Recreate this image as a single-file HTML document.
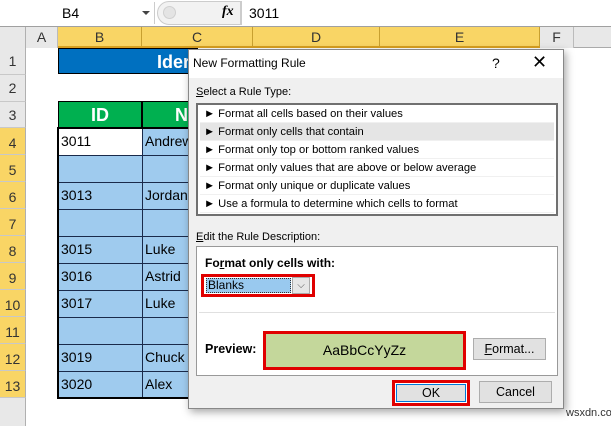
<!DOCTYPE html>
<html><head><style>
*{margin:0;padding:0;box-sizing:border-box}
body{width:611px;height:426px;overflow:hidden;background:#fff;font-family:"Liberation Sans",Calibri,sans-serif;position:relative;font-size:13px;color:#000}
.a{position:absolute}
.rh{position:absolute;left:0;width:26px;text-align:center;font-size:14px;color:#333;border-bottom:1px solid #c8c8c8;border-right:1px solid #b0b0b0}
.ch{position:absolute;top:27px;height:21px;text-align:center;font-size:14px;color:#333;line-height:21px;border-right:1px solid #c8a030}
.cell{position:absolute;font-size:14px;line-height:27px;padding-left:3px}
.it{height:18px;line-height:18px;padding-left:4px;font-size:11.2px;font-family:"Liberation Sans",sans-serif;border-bottom:1px solid #f0f0f0}
.btn{position:absolute;background:#e1e1e1;border:1px solid #adadad;font-size:12.5px;text-align:center}
</style></head><body>
<div class="a" style="left:0;top:0;width:611px;height:27px;background:#fff;border-bottom:1px solid #a0a0a0"></div>
<div class="a" style="left:0;top:2px;width:155px;height:22px;border-right:1px solid #ccc"></div>
<div class="a" style="left:62px;top:5px;font-size:14px">B4</div>
<div class="a" style="left:142px;top:11px;width:0;height:0;border-left:4px solid transparent;border-right:4px solid transparent;border-top:4px solid #444"></div>
<div class="a" style="left:157px;top:1px;width:84px;height:24px;background:#f2f2f2;border:1px solid #ccc;border-radius:12px 0 0 12px"></div>
<div class="a" style="left:163px;top:6px;width:13px;height:13px;border-radius:50%;background:#e4e4e4;border:1px solid #d0d0d0"></div>
<div class="a" style="left:222px;top:4px;font-family:'Liberation Serif',serif;font-style:italic;font-weight:bold;font-size:14px">fx</div>
<div class="a" style="left:241px;top:1px;width:370px;height:24px;border-left:1px solid #ccc;background:#fff"></div>
<div class="a" style="left:249px;top:5px;font-size:14px">3011</div>
<div class="a" style="left:0;top:27px;width:611px;height:21px;background:#e8e8e8;border-bottom:1px solid #aaa"></div>
<div class="ch" style="left:26px;width:32px;background:#e8e8e8;border-right:1px solid #bbb">A</div>
<div class="ch" style="left:58px;width:84px;background:#f9d565">B</div>
<div class="ch" style="left:142px;width:111px;background:#f9d565">C</div>
<div class="ch" style="left:253px;width:127px;background:#f9d565">D</div>
<div class="ch" style="left:380px;width:160px;background:#f9d565">E</div>
<div class="ch" style="left:540px;width:34px;background:#e8e8e8;border-right:1px solid #bbb">F</div>
<div class="a" style="left:58px;top:46px;width:482px;height:2px;background:#d8a020"></div>
<div class="a" style="left:0;top:27px;width:26px;height:399px;background:#e8e8e8;border-right:1px solid #b0b0b0"></div>
<div class="rh" style="top:48px;height:27px;line-height:27px;background:#e8e8e8">1</div>
<div class="rh" style="top:75px;height:27px;line-height:27px;background:#e8e8e8">2</div>
<div class="rh" style="top:102px;height:26px;line-height:26px;background:#e8e8e8">3</div>
<div class="rh" style="top:128px;height:27px;line-height:30px;background:#f9d565">4</div>
<div class="rh" style="top:155px;height:27px;line-height:30px;background:#f9d565">5</div>
<div class="rh" style="top:182px;height:27px;line-height:30px;background:#f9d565">6</div>
<div class="rh" style="top:209px;height:27px;line-height:30px;background:#f9d565">7</div>
<div class="rh" style="top:236px;height:27px;line-height:30px;background:#f9d565">8</div>
<div class="rh" style="top:263px;height:27px;line-height:30px;background:#f9d565">9</div>
<div class="rh" style="top:290px;height:27px;line-height:30px;background:#f9d565">10</div>
<div class="rh" style="top:317px;height:27px;line-height:30px;background:#f9d565">11</div>
<div class="rh" style="top:344px;height:27px;line-height:30px;background:#f9d565">12</div>
<div class="rh" style="top:371px;height:27px;line-height:30px;background:#f9d565">13</div>
<div class="a" style="left:58px;top:48px;width:140px;height:26px;background:#0070c0;border:1px solid #000;color:#fff;font-weight:bold;font-size:18px;line-height:26px;padding-left:98px">Ider</div>
<div class="a" style="left:58px;top:101px;width:84px;height:27px;background:#00b050;border:1px solid #000;color:#fff;font-weight:bold;font-size:18px;line-height:27px;text-align:center">ID</div>
<div class="a" style="left:142px;top:101px;width:60px;height:27px;background:#00b050;border:1px solid #000;color:#fff;font-weight:bold;font-size:18px;line-height:27px;padding-left:32px">N</div>
<div class="a" style="left:57px;top:127px;width:145px;height:272px;border:2px solid #000;background:#9fcbee"></div>
<div class="a" style="left:59px;top:129px;width:83px;height:26px;background:#fff"></div>
<div class="a" style="left:142px;top:129px;width:1px;height:268px;background:#1a2a4a"></div>
<div class="a" style="left:59px;top:155px;width:143px;height:1px;background:#1a2a4a"></div>
<div class="a" style="left:59px;top:182px;width:143px;height:1px;background:#1a2a4a"></div>
<div class="a" style="left:59px;top:209px;width:143px;height:1px;background:#1a2a4a"></div>
<div class="a" style="left:59px;top:236px;width:143px;height:1px;background:#1a2a4a"></div>
<div class="a" style="left:59px;top:263px;width:143px;height:1px;background:#1a2a4a"></div>
<div class="a" style="left:59px;top:290px;width:143px;height:1px;background:#1a2a4a"></div>
<div class="a" style="left:59px;top:317px;width:143px;height:1px;background:#1a2a4a"></div>
<div class="a" style="left:59px;top:344px;width:143px;height:1px;background:#1a2a4a"></div>
<div class="a" style="left:59px;top:371px;width:143px;height:1px;background:#1a2a4a"></div>
<div class="cell" style="left:58px;top:128px">3011</div><div class="cell" style="left:142px;top:128px">Andrew</div>
<div class="cell" style="left:58px;top:182px">3013</div><div class="cell" style="left:142px;top:182px">Jordan</div>
<div class="cell" style="left:58px;top:236px">3015</div><div class="cell" style="left:142px;top:236px">Luke</div>
<div class="cell" style="left:58px;top:263px">3016</div><div class="cell" style="left:142px;top:263px">Astrid</div>
<div class="cell" style="left:58px;top:290px">3017</div><div class="cell" style="left:142px;top:290px">Luke</div>
<div class="cell" style="left:58px;top:344px">3019</div><div class="cell" style="left:142px;top:344px">Chuck</div>
<div class="cell" style="left:58px;top:371px">3020</div><div class="cell" style="left:142px;top:371px">Alex</div>
<div class="a" style="left:188px;top:49px;width:376px;height:360px;background:#f0f0f0;border:1px solid #888;box-shadow:2px 3px 8px rgba(0,0,0,.35)">
 <div style="height:28px;background:#fff;font-size:12px;line-height:27px;padding-left:4px">New Formatting Rule</div>
 <div class="a" style="left:303px;top:5px;font-size:14px">?</div>
 <div class="a" style="left:343px;top:2px;font-size:18px;font-weight:300">✕</div>
 <div class="a" style="left:7px;top:36px;font-size:11px"><u>S</u>elect a Rule Type:</div>
 <div class="a" style="left:7px;top:53px;width:362px;height:113px;border:2px solid #707070;background:#fff;padding:0 2px">
  <div class="it">► Format all cells based on their values</div>
  <div class="it" style="background:#e5e5e5">► Format only cells that contain</div>
  <div class="it">► Format only top or bottom ranked values</div>
  <div class="it">► Format only values that are above or below average</div>
  <div class="it">► Format only unique or duplicate values</div>
  <div class="it">► Use a formula to determine which cells to format</div>
 </div>
 <div class="a" style="left:7px;top:181px;font-size:11px"><u>E</u>dit the Rule Description:</div>
 <div class="a" style="left:7px;top:196px;width:362px;height:130px;background:#fff;border:1px solid #999"></div>
 <div class="a" style="left:10px;top:262px;width:356px;height:1px;background:#e0e0e0"></div>
 <div class="a" style="left:16px;top:206px;font-size:12px;font-weight:bold">Fo<u>r</u>mat only cells with:</div>
 <div class="a" style="left:12px;top:224px;width:114px;height:23px;border:3px solid #e00000;background:#fff"></div>
 <div class="a" style="left:17px;top:228px;width:85px;height:15px;background:#99c9ef;border:1px dotted #333;font-size:12px;line-height:13px;padding-left:1px">Blanks</div>
 <div class="a" style="left:103px;top:227px;width:18px;height:17px;background:#e6e6e6;border:1px solid #aaa;font-size:10px;text-align:center;line-height:15px;color:#555">⌵</div>
 <div class="a" style="left:16px;top:292px;font-size:12.5px;font-weight:bold">Preview:</div>
 <div class="a" style="left:74px;top:281px;width:203px;height:39px;border:3px solid #e00000;background:#c4d79b;font-size:14px;text-align:center;line-height:33px">AaBbCcYyZz</div>
 <div class="btn" style="left:284px;top:288px;width:73px;height:22px;line-height:20px"><u>F</u>ormat...</div>
 <div class="a" style="left:203px;top:330px;width:78px;height:26px;border:3px solid #e00000;background:#fff;padding:1px">
  <div style="width:100%;height:100%;background:#e1e1e1;border:1px solid #0078d7;font-size:12.5px;text-align:center;line-height:16px">OK</div>
 </div>
 <div class="btn" style="left:290px;top:331px;width:73px;height:22px;line-height:20px">Cancel</div>
</div>
<div class="a" style="left:566px;top:407px;font-size:11px;color:#333">wsxdn.com</div>
</body></html>
